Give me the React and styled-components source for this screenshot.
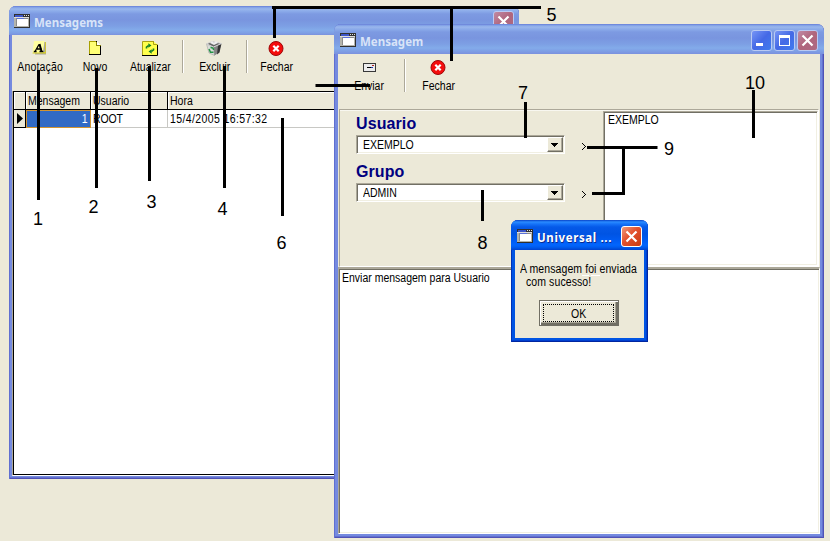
import React from "react";
import styled, { createGlobalStyle, css } from "styled-components";

const GlobalStyle = createGlobalStyle`
  * { box-sizing: border-box; }
  html, body { margin: 0; padding: 0; overflow: hidden; }
  body { background: #ece9d8; font-family: "Liberation Sans", Arial, sans-serif; font-size: 12px; color: #000; }
`;

const Desktop = styled.main`
  position: relative;
  width: 830px;
  height: 541px;
  background: #ece9d8;
  overflow: hidden;
`;

const inactiveBar = css`
  background: linear-gradient(#6478d2 0, #7c9ce6 1px, #9ab7ec 3px, #8cacea 5px, #7d9ae2 8px, #7995df 14px, #7d9fe4 20px, #83abea 24px, #7e9fe5 27px, #7b91de 100%);
`;
const activeBar = css`
  background: linear-gradient(#0842c8 0, #2a8bff 2px, #1673f8 4px, #0559e8 7px, #0054e3 14px, #005bf2 20px, #0265fd 25px, #005df0 27px, #0043cf 100%);
`;

const WindowFrame = styled.section`
  position: absolute;
  left: ${(p) => p.$x}px;
  top: ${(p) => p.$y}px;
  width: ${(p) => p.$w}px;
  height: ${(p) => p.$h}px;
  display: flex;
  flex-direction: column;
  padding: 0 ${(p) => p.$edge}px ${(p) => p.$edge}px;
  border-radius: 7px 7px 0 0;
  overflow: hidden;
  background: ${(p) => (p.$active ? "#0054e3" : "#758adf")};
  box-shadow: ${(p) =>
    p.$active
      ? "inset 1px 0 #0032b4, inset -1px -1px #0026a0, inset -2px -2px #0040d0"
      : "inset 1px 0 #606fd0, inset -1px -1px #5052b5, inset -2px -2px #6372cf"};
`;

const TitleBar = styled.header`
  display: flex;
  align-items: center;
  flex: none;
  height: ${(p) => p.$h}px;
  margin: 0 -${(p) => p.$edge}px;
  padding: ${(p) => p.$top ?? 3}px ${(p) => p.$right ?? 6}px 0 ${(p) => p.$left ?? 5}px;
  ${(p) => (p.$active ? activeBar : inactiveBar)}
  > svg { flex: none; margin-bottom: 1px; }
`;

const Title = styled.h1`
  flex: 1;
  min-width: 0;
  margin: 0 0 0 4px;
  font: bold 13px/16px "Noto Sans", "Open Sans", sans-serif;
  letter-spacing: ${(p) => p.$spacing ?? 0}px;
  transform: scaleX(0.885);
  transform-origin: left;
  white-space: nowrap;
  color: ${(p) => (p.$active ? "#fff" : "#d8e4f8")};
  text-shadow: ${(p) => (p.$active ? "1px 1px #0a2a90" : "none")};
`;

const Narrow = styled.span`
  display: inline-block;
  transform: scaleX(0.875);
  transform-origin: ${(p) => p.$origin ?? "left"};
  letter-spacing: ${(p) => p.$spacing ?? 0}px;
  white-space: pre;
`;

const CaptionButtons = styled.div`
  display: flex;
  flex: none;
  gap: 2px;
`;

const captionFill = {
  mute: "linear-gradient(135deg, #c08aa4, #b0657c 50%, #ad6a83)",
  blue: "linear-gradient(135deg, #7795f5, #4469e6 50%, #3f7bee)",
  red: "linear-gradient(135deg, #f09a7c, #e2502d 45%, #c93b12)",
};

const CaptionButton = styled.button`
  width: 21px;
  height: 21px;
  padding: 0;
  display: flex;
  border: 1px solid ${(p) => (p.$kind === "red" ? "#fff" : "#b9caf3")};
  border-radius: 3px;
  background: ${(p) => captionFill[p.$kind]};
  svg { display: block; }
`;

const Client = styled.div`
  flex: 1;
  min-height: 0;
  display: flex;
  flex-direction: column;
  background: #ece9d8;
`;

const Toolbar = styled.nav`
  flex: none;
  display: flex;
  height: ${(p) => p.$h}px;
  padding: 5px 0 0 ${(p) => p.$left ?? 0}px;
`;

const ToolButton = styled.button`
  width: ${(p) => p.$w ?? 55}px;
  height: 35px;
  padding: 0;
  border: 0;
  background: none;
  display: flex;
  flex-direction: column;
  align-items: center;
  font: inherit;
  line-height: 13px;
  color: #000;
  svg { display: block; margin: 0 2px 5px 0; flex: none; }
`;

const Separator = styled.span`
  width: 2px;
  height: 33px;
  margin: 0 ${(p) => p.$right ?? 3}px 0 ${(p) => p.$left ?? 4}px;
  background: linear-gradient(90deg, #aca899 50%, #fff 50%);
`;

const GridBox = styled.div`
  flex: 1;
  border: 1px solid #000;
  margin: 0 1px 1px 1px;
  background: #fff;
  box-shadow: -1px 0 #aca899, 0 1px #fff;
`;

const GridRow = styled.div`
  display: grid;
  grid-template-columns: 12px 65px 77px 1fr;
  height: 18px;
`;

const HeadCell = styled.div`
  height: 18px;
  padding: 2px 0 0 2px;
  line-height: 14px;
  background: #ece9d8;
  border-right: 1px solid #000;
  border-bottom: 1px solid #000;
  box-shadow: inset 1px 1px #fff;
`;

const Cell = styled.div`
  padding: 2px 3px 0 2px;
  line-height: 15px;
  border-right: 1px solid #c8c8c4;
  border-bottom: 1px solid #c8c8c4;
`;

const SelectedCell = styled(Cell)`
  background: #316ac5;
  color: #fff;
  text-align: right;
  padding: 1px 2px 0;
  border: 1px solid #d29432;
`;

const IndicatorCell = styled.div`
  display: flex;
  align-items: center;
  padding-left: 3px;
  background: #ece9d8;
  border-right: 1px solid #000;
  border-bottom: 1px solid #000;
`;

const Panel = styled.div`
  flex: none;
  display: flex;
  height: 158px;
  margin: 0 1px;
  border: 1px solid #aca899;
  border-right-color: #fff;
  border-bottom-color: #fff;
  box-shadow: inset 0 1px #f8f7f0;
`;

const Form = styled.div`
  width: 264px;
  padding: 5px 0 0 16px;
`;

const FieldLabel = styled.label`
  display: block;
  height: 20px;
  font: bold 16px/18px "Liberation Sans", Arial, sans-serif;
  letter-spacing: 0.1px;
  color: #000080;
`;

const FieldRow = styled.div`
  display: flex;
  align-items: center;
  height: 19px;
  margin-bottom: 9px;
`;

const sunken = css`
  border: 1px solid;
  border-color: #aca899 #fff #fff #aca899;
  box-shadow: inset 1px 1px #716f64, inset -1px -1px #f1efe2;
`;

const Combo = styled.div`
  ${sunken}
  width: 209px;
  height: 19px;
  display: flex;
  justify-content: space-between;
  padding: 1px 1px 1px 6px;
  line-height: 16px;
  background: #fff;
`;

const raised = css`
  background: #ece9d8;
  border: 1px solid;
  border-color: #fff #716f64 #716f64 #fff;
  box-shadow: inset -1px -1px #aca899;
`;

const DropButton = styled.button`
  ${raised}
  width: 16px;
  height: 15px;
  padding: 1px 0 0 3px;
  display: flex;
  align-items: center;
`;

const AddButton = styled.button`
  border: 0;
  background: none;
  padding: 4px 0 0;
  margin-left: 17px;
  display: flex;
`;

const ListBox = styled.div`
  ${sunken}
  width: 215px;
  height: 155px;
  margin-top: 1px;
  padding: 2px 4px;
  line-height: 13px;
  background: #fff;
`;

const Memo = styled.div`
  ${sunken}
  flex: 1;
  padding: 2px 3px;
  line-height: 14px;
  background: #fff;
  border-top-width: 2px;
`;

const DialogBody = styled.div`
  flex: 1;
  background: #ece9d8;
  display: flex;
  flex-direction: column;
  align-items: flex-start;
  padding: 13px 0 0 5px;
`;

const Message = styled.p`
  margin: 0 0 11px;
  line-height: 13px;
`;

const OkButton = styled.button`
  width: 80px;
  height: 26px;
  padding: 3px;
  margin-left: 19px;
  background: #ece9d8;
  border: 1px solid #716f64;
  box-shadow: inset 1px 1px #fff, inset -2px -2px #716f64, inset -3px -3px #aca899;
  font: inherit;
  color: #000;
`;

const FocusRing = styled.span`
  display: block;
  height: 18px;
  line-height: 18px;
  margin-right: 1px;
  border: 1px dotted #000;
`;

const Overlay = styled.svg`
  position: absolute;
  inset: 0;
  pointer-events: none;
`;

const AppIcon = () => (
  <svg width="16" height="14" viewBox="0 0 16 14" shapeRendering="crispEdges">
    <path fill="#303030" d="M0 0h16v14H0z" />
    <path fill="#b4b4ac" d="M0 3h15v10H0z" />
    <path fill="#3d55c8" d="M1 1h8v2H1z" />
    <path fill="#ddd" d="M10 1h1v1h-1zM12 1h1v1h-1zM14 1h1v1h-1zM0 3h15v1H0z" />
    <path fill="#8a8a8a" d="M2 4h12v1H2zM2 5h1v7H2z" />
    <path fill="#5b70d8" d="M3 4h7v1H3z" />
    <path fill="#fff" d="M3 5h11v7H3z" />
  </svg>
);

const CloseGlyph = () => (
  <svg width="19" height="19" viewBox="0 0 19 19">
    <path d="M4.500 4.500l10 10M14.500 4.500l-10 10" stroke="#fff" strokeWidth="2.200" />
  </svg>
);
const MinGlyph = () => (
  <svg width="19" height="19"><path fill="#fff" d="M4 12h7v3H4z" /></svg>
);
const MaxGlyph = () => (
  <svg width="19" height="19"><path fill="#fff" fillRule="evenodd" d="M4 4h11v11H4zM5 7v7h9V7z" /></svg>
);

const NoteIcon = () => (
  <svg width="16" height="16" viewBox="0 0 16 16">
    <path fill="#a9a69c" d="M5 2h10v12.500H4z" />
    <path fill="#d8cf20" d="M2 12h12V2h.8v11.500H1.500z" />
    <path fill="#ffffa0" d="M3 1h10.500L12 12.500H1.500z" />
    <path d="M4 11.500L8 4.500M6 9h4.500M2.800 11.500h2.800M8.500 11.500h3.800" fill="none" stroke="#000" strokeWidth="1.300" />
    <path d="M8.500 4l2 7.500" stroke="#000" strokeWidth="2" />
  </svg>
);
const NewIcon = () => (
  <svg width="16" height="16" viewBox="0 0 16 16" shapeRendering="crispEdges">
    <path d="M2.500 1.500h7l4 4v9h-11z" fill="#ffff75" stroke="#000" />
    <path d="M9.500 1.500v4h4" fill="#fff" stroke="#8a8400" />
    <path d="M2 1h1v13H2zM3 1h6v1H3z" fill="#a8a000" />
  </svg>
);
const RefreshIcon = () => (
  <svg width="16" height="16" viewBox="0 0 16 16">
    <path d="M.500 1.500h11l4 3v11H.500z" fill="#ffff4d" />
    <path d="M.500 15V1.500H12M11.500 1.500v3h4" fill="none" stroke="#aaa116" />
    <path d="M0 15.500h15.500V5" fill="none" stroke="#000" />
    <path d="M4.500 8.500V7.200L6.500 5.500M11.500 8.500v1.300L9.500 11.500" fill="none" stroke="#148225" strokeWidth="1.600" />
    <path fill="#148225" d="M6.300 3.300L9.500 5.500 6.300 7.700zM9.700 9.300L6.500 11.500l3.200 2.200z" />
  </svg>
);
const TrashIcon = () => (
  <svg width="16" height="16" viewBox="0 0 16 16">
    <path d="M.500 4l7 3 1 8.500L3 13z" fill="#d9ddd8" stroke="#999" strokeWidth=".5" />
    <path d="M7.500 7l7.500-3-2 8.500-4.500 3z" fill="#858585" />
    <path d="M12 5.500l3.500-2-2 9-2.500 2z" fill="#343434" />
    <path d="M.500 3.800l6-2.300 9 2-8 3.500z" fill="#666" stroke="#d6d6d6" strokeWidth="1" />
    <path d="M4 3l2-2 2 1.500L10 1l2 2-4 2z" fill="#eee" />
    <path d="M4.500 7.500c3 0 3 1 3 2.500M3 9l1.500 3.300h3" fill="none" stroke="#249345" strokeWidth="1.500" />
  </svg>
);
const StopIcon = () => (
  <svg width="16" height="16" viewBox="0 0 16 16">
    <circle cx="8" cy="8.500" r="7" fill="#f40d0d" stroke="#9c0808" />
    <path d="M5.300 5.800l5.400 5.400M10.700 5.800l-5.400 5.400" stroke="#fff" strokeWidth="2.200" />
  </svg>
);
const EnvelopeIcon = () => (
  <svg width="16" height="16" viewBox="0 0 16 16" shapeRendering="crispEdges">
    <path d="M2.500 4.500h12v8h-12z" fill="#ececec" stroke="#383838" />
    <path fill="#000" d="M6 8h4v1H6z" />
    <path fill="#b02020" d="M11 6h2v1h-2z" />
    <path fill="#2038ae" d="M10 8h2v1h-2z" />
  </svg>
);

const Chevron = () => (
  <svg width="5" height="7" viewBox="0 0 5 7" shapeRendering="crispEdges">
    <path d="M0 0h1v1H0zM1 1h1v1H1zM2 2h1v1H2zM3 3h1v1H3zM2 4h1v1H2zM1 5h1v1H1zM0 6h1v1H0z" />
  </svg>
);
const Arrow = () => (
  <svg width="7" height="4" viewBox="0 0 7 4" shapeRendering="crispEdges"><path d="M0 0h7L3.500 4z" /></svg>
);

const pointers = [
  "M38.500 70V200", "M96.500 68V188", "M149.500 66V181", "M224.500 66V188",
  "M282.500 118V216", "M272 7.500H541", "M274.500 7V38", "M451.500 6V61",
  "M315.500 85.500H370", "M525.500 102V138", "M482.500 190V221",
  "M753.500 90V138", "M587 147.500H657.500", "M592 193.500H625M623.500 195V147",
];
const numbers = [
  [33, 225, "1"], [88.500, 213, "2"], [146.500, 208, "3"], [217.500, 215, "4"], [546.500, 21, "5"],
  [276.500, 248.500, "6"], [518, 98.500, "7"], [477.500, 248.500, "8"], [664, 154.500, "9"], [745, 88.500, "10"],
];

function Tool({ icon, label, spacing, width }) {
  return (
    <ToolButton $w={width}>
      {icon}
      <Narrow $origin="center" $spacing={spacing}>{label}</Narrow>
    </ToolButton>
  );
}

function Field({ label, value }) {
  return (
    <>
      <FieldLabel>{label}</FieldLabel>
      <FieldRow>
        <Combo>
          <Narrow>{value}</Narrow>
          <DropButton><Arrow /></DropButton>
        </Combo>
        <AddButton><Chevron /></AddButton>
      </FieldRow>
    </>
  );
}

function MessagesWindow() {
  return (
    <WindowFrame $x={9} $y={6} $w={510} $h={473} $edge={3}>
      <TitleBar $h={29} $edge={3} $top={2} $right={5}>
        <AppIcon />
        <Title>Mensagems</Title>
        <CaptionButtons><CaptionButton $kind="mute"><CloseGlyph /></CaptionButton></CaptionButtons>
      </TitleBar>
      <Client>
        <Toolbar $h={56}>
          <Tool width={56} spacing={0.2} icon={<NoteIcon />} label="Anotação" />
          <Tool icon={<NewIcon />} label="Novo" />
          <Tool icon={<RefreshIcon />} label="Atualizar" />
          <Separator />
          <Tool spacing={-0.1} icon={<TrashIcon />} label="Excluir" />
          <Separator $right={1} />
          <Tool icon={<StopIcon />} label="Fechar" />
        </Toolbar>
        <GridBox>
          <GridRow>
            <HeadCell />
            <HeadCell><Narrow>Mensagem</Narrow></HeadCell>
            <HeadCell><Narrow>Usuario</Narrow></HeadCell>
            <HeadCell><Narrow>Hora</Narrow></HeadCell>
          </GridRow>
          <GridRow>
            <IndicatorCell>
              <svg width="6" height="11"><path d="M0 0l6 5.500L0 11z" /></svg>
            </IndicatorCell>
            <SelectedCell><Narrow $origin="right">1</Narrow></SelectedCell>
            <Cell><Narrow $spacing={-0.2}>ROOT</Narrow></Cell>
            <Cell><Narrow $spacing={0.45}>15/4/2005 16:57:32</Narrow></Cell>
          </GridRow>
        </GridBox>
      </Client>
    </WindowFrame>
  );
}

function ComposeWindow() {
  return (
    <WindowFrame $x={334} $y={24} $w={490} $h={514} $edge={4}>
      <TitleBar $h={30} $edge={4} $top={3} $left={6}>
        <AppIcon />
        <Title>Mensagem</Title>
        <CaptionButtons>
          <CaptionButton $kind="blue"><MinGlyph /></CaptionButton>
          <CaptionButton $kind="blue"><MaxGlyph /></CaptionButton>
          <CaptionButton $kind="mute"><CloseGlyph /></CaptionButton>
        </CaptionButtons>
      </TitleBar>
      <Client>
        <Toolbar $h={55} $left={4}>
          <Tool icon={<EnvelopeIcon />} label="Enviar" />
          <Separator $left={7} $right={5} />
          <Tool icon={<StopIcon />} label="Fechar" />
        </Toolbar>
        <Panel>
          <Form>
            <Field label="Usuario" value="EXEMPLO" />
            <Field label="Grupo" value="ADMIN" />
          </Form>
          <ListBox><Narrow>EXEMPLO</Narrow></ListBox>
        </Panel>
        <Memo><Narrow>Enviar mensagem para Usuario</Narrow></Memo>
      </Client>
    </WindowFrame>
  );
}

function SentDialog() {
  return (
    <WindowFrame $active $x={511} $y={220} $w={137} $h={122} $edge={4}>
      <TitleBar $active $h={30} $edge={4} $top={3} $left={6}>
        <AppIcon />
        <Title $active $spacing={0.7}>Universal ...</Title>
        <CaptionButtons><CaptionButton $kind="red"><CloseGlyph /></CaptionButton></CaptionButtons>
      </TitleBar>
      <DialogBody>
        <Message><Narrow $spacing={0.1}>{"A mensagem foi enviada\n  com sucesso!"}</Narrow></Message>
        <OkButton><FocusRing><Narrow $origin="center">OK</Narrow></FocusRing></OkButton>
      </DialogBody>
    </WindowFrame>
  );
}

export default function App() {
  return (
    <>
      <GlobalStyle />
      <Desktop>
        <MessagesWindow />
        <ComposeWindow />
        <SentDialog />
        <Overlay width="830" height="541">
          <path d={pointers.join("")} fill="none" stroke="#000" strokeWidth="3" />
          <path d="M582 275.500h7M591 275.500h9" stroke="#fff" />
          <g fontFamily="Liberation Sans, Arial, sans-serif" fontSize="18">
            {numbers.map(([x, y, label]) => (
              <text key={label} x={x} y={y}>{label}</text>
            ))}
          </g>
        </Overlay>
      </Desktop>
    </>
  );
}
